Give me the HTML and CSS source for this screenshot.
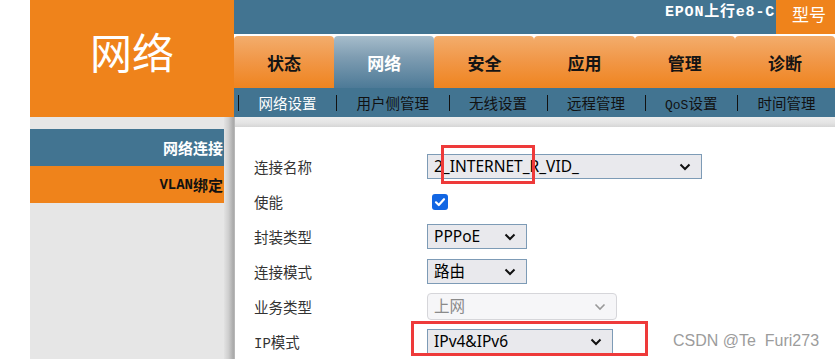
FILE: index.html
```html
<!DOCTYPE html>
<html lang="zh">
<head>
<meta charset="utf-8">
<title>网络</title>
<link rel="stylesheet" href="styles.css">
</head>
<body>
<div class="page">
  <header class="header">
    <div class="logo">网络</div>
    <div class="head-right">
      <div class="topbar">
        <span class="model-val">EPON上行e8-C</span>
        <span class="model-label">型号</span>
      </div>
      <nav class="tabs">
        <div class="tab">状态</div>
        <div class="tab active">网络</div>
        <div class="tab">安全</div>
        <div class="tab">应用</div>
        <div class="tab">管理</div>
        <div class="tab">诊断</div>
      </nav>
      <nav class="subnav">
        <span class="bar"></span><span class="sub current">网络设置</span>
        <span class="bar"></span><span class="sub">用户侧管理</span>
        <span class="bar"></span><span class="sub">无线设置</span>
        <span class="bar"></span><span class="sub">远程管理</span>
        <span class="bar"></span><span class="sub"><span class="mono">QoS</span>设置</span>
        <span class="bar"></span><span class="sub">时间管理</span>
      </nav>
    </div>
  </header>
  <div class="main">
    <aside class="sidebar">
      <div class="side-item blue">网络连接</div>
      <div class="side-item orange"><span class="mono">VLAN</span>绑定</div>
    </aside>
    <div class="divider"></div>
    <section class="content">
      <div class="content-top"></div>
      <div class="form">
        <div class="row">
          <label class="label">连接名称</label>
          <div class="select w-name"><span>2_INTERNET_R_VID_</span><svg class="chev" viewBox="0 0 12 8" width="12" height="8"><path d="M1.5 1.5 L6 6 L10.5 1.5" fill="none" stroke="#111" stroke-width="2"/></svg></div>
        </div>
        <div class="row">
          <label class="label">使能</label>
          <div class="checkbox"><svg viewBox="0 0 16 16" width="16" height="16"><path d="M4 8.3 L6.8 11 L12 5.2" fill="none" stroke="#fff" stroke-width="2.2" stroke-linecap="round" stroke-linejoin="round"/></svg></div>
        </div>
        <div class="row">
          <label class="label">封装类型</label>
          <div class="select w-short"><span>PPPoE</span><svg class="chev" viewBox="0 0 12 8" width="12" height="8"><path d="M1.5 1.5 L6 6 L10.5 1.5" fill="none" stroke="#111" stroke-width="2"/></svg></div>
        </div>
        <div class="row">
          <label class="label">连接模式</label>
          <div class="select w-short"><span>路由</span><svg class="chev" viewBox="0 0 12 8" width="12" height="8"><path d="M1.5 1.5 L6 6 L10.5 1.5" fill="none" stroke="#111" stroke-width="2"/></svg></div>
        </div>
        <div class="row">
          <label class="label">业务类型</label>
          <div class="select disabled w-mid"><span>上网</span><svg class="chev" viewBox="0 0 12 8" width="12" height="8"><path d="M1.5 1.5 L6 6 L10.5 1.5" fill="none" stroke="#999" stroke-width="1.6"/></svg></div>
        </div>
        <div class="row">
          <label class="label"><span class="mono-l">IP</span>模式</label>
          <div class="select w-ip"><span>IPv4&amp;IPv6</span><svg class="chev" viewBox="0 0 12 8" width="12" height="8"><path d="M1.5 1.5 L6 6 L10.5 1.5" fill="none" stroke="#111" stroke-width="2"/></svg></div>
        </div>
      </div>
    </section>
  </div>
  <div class="mark mark-1"></div>
  <div class="mark mark-2"></div>
  <div class="watermark">CSDN @Te&nbsp; Furi273</div>
</div>
</body>
</html>
```

FILE: styles.css
```css
html, body {
  margin: 0;
  padding: 0;
  background: #fff;
}
body {
  width: 835px;
  height: 359px;
  overflow: hidden;
  font-family: "Noto Sans CJK SC", "Noto Sans", sans-serif;
}
.page {
  position: relative;
  width: 835px;
  height: 359px;
  padding-left: 30px;
  box-sizing: border-box;
}
.mono {
  font-family: "Liberation Mono", "Noto Sans CJK SC", monospace;
}
.header {
  display: grid;
  grid-template-columns: 204px 1fr;
  height: 117px;
}
.logo {
  background: #ef831b;
  color: #fff;
  font-size: 42px;
  line-height: 1;
  display: flex;
  justify-content: center;
  padding-top: 30px;
  box-sizing: border-box;
  font-weight: 400;
}
.head-right {
  display: flex;
  flex-direction: column;
  min-width: 0;
}
.topbar {
  height: 34px;
  background: #427491;
  display: flex;
  justify-content: flex-end;
  align-items: stretch;
}
.model-val {
  color: #fff;
  font-family: "Liberation Mono", "Noto Sans CJK SC", monospace;
  font-weight: 700;
  font-size: 15px;
  letter-spacing: 0.8px;
  padding-top: 4px;
  line-height: 18px;
  margin-right: 1px;
  white-space: nowrap;
}
.model-label {
  width: 59px;
  background: #ef831b;
  color: #fff;
  font-size: 17px;
  line-height: 18px;
  padding-top: 5px;
  padding-left: 16px;
  box-sizing: border-box;
  white-space: nowrap;
  overflow: hidden;
}
.tabs {
  display: grid;
  grid-template-columns: repeat(6, 1fr);
  background: #fff;
  padding-top: 2px;
  height: 54px;
  box-sizing: border-box;
}
.tab {
  background: linear-gradient(#f3ad6c, #f19849 45%, #ef841f);
  border-radius: 4px 4px 0 0;
  color: #141414;
  font-weight: 700;
  font-size: 17px;
  display: flex;
  align-items: center;
  justify-content: center;
}
.tab.active {
  background: linear-gradient(#a6bccb, #7f9db2 40%, #4d7a97);
  color: #fff;
}
.subnav {
  height: 29px;
  background: #427491;
  display: flex;
  align-items: center;
  padding-left: 4px;
  font-size: 14.5px;
  color: #111;
  white-space: nowrap;
  overflow: hidden;
}
.bar {
  width: 1px;
  height: 16px;
  background: #111;
  margin: 0 19.5px;
}
.bar:first-child {
  margin-left: 0;
}
.sub.current {
  color: #fff;
}
.sub .mono {
  font-size: 13px;
}
.main {
  display: flex;
  height: 242px;
}
.sidebar {
  width: 194px;
  background: #e6e6e6;
  padding-top: 12px;
  box-sizing: border-box;
}
.side-item {
  height: 37px;
  display: flex;
  align-items: center;
  justify-content: flex-end;
  padding-right: 1px;
  font-weight: 700;
  font-size: 15px;
  white-space: nowrap;
  overflow: hidden;
}
.side-item.blue {
  background: #427491;
  color: #fff;
}
.side-item.orange {
  background: #ef831b;
  color: #111;
}
.side-item .mono {
  font-size: 14px;
}
.divider {
  width: 11px;
  background: linear-gradient(to right, #e2e2e2, #cfcfcf 40%, #a9a9a9 85%, #bdbdbd);
}
.content {
  flex: 1;
  background: #fff;
  display: flex;
  flex-direction: column;
}
.content-top {
  height: 10px;
  background: linear-gradient(#ededed, #e4e4e4 60%, #d6d6d6);
}
.form {
  padding: 22px 0 0 19px;
}
.row {
  display: grid;
  grid-template-columns: 173px auto;
  justify-items: start;
  align-items: center;
  height: 35px;
}
.label {
  font-size: 14.5px;
  color: #333;
}
.mono-l {
  font-family: "Liberation Mono", monospace;
  font-size: 14px;
}
.select {
  height: 25px;
  box-sizing: border-box;
  border: 1px solid #7d9bb6;
  background: #e9e9ed;
  display: flex;
  align-items: center;
  justify-content: space-between;
  padding: 0 6px 0 6px;
  font-family: "Noto Sans", "Noto Sans CJK SC", sans-serif;
  font-size: 15.5px;
  color: #000;
}
.select span {
  line-height: 1;
}
.select.disabled {
  height: 27px;
  border: 1px solid #d6d6da;
  border-radius: 4px;
  background: #f6f6f8;
  color: #8a8a8a;
}
.w-name { width: 275px; }
.w-short { width: 100px; }
.w-mid { width: 190px; }
.w-ip { width: 186px; }
.chev {
  flex: none;
  margin-right: 4px;
}
.checkbox {
  width: 16px;
  height: 16px;
  margin-left: 5px;
  border-radius: 3px;
  background: #1266e3;
  display: flex;
}
.mark {
  position: absolute;
  border: 3px solid #ee3a3a;
  box-sizing: border-box;
}
.mark-1 {
  left: 441px;
  top: 145px;
  width: 94px;
  height: 39px;
}
.mark-2 {
  left: 411px;
  top: 321px;
  width: 237px;
  height: 35px;
}
.watermark {
  position: absolute;
  left: 673px;
  top: 332px;
  font-family: "Liberation Sans", Arial, sans-serif;
  font-size: 16px;
  color: #9c9c9c;
  white-space: nowrap;
}
```
